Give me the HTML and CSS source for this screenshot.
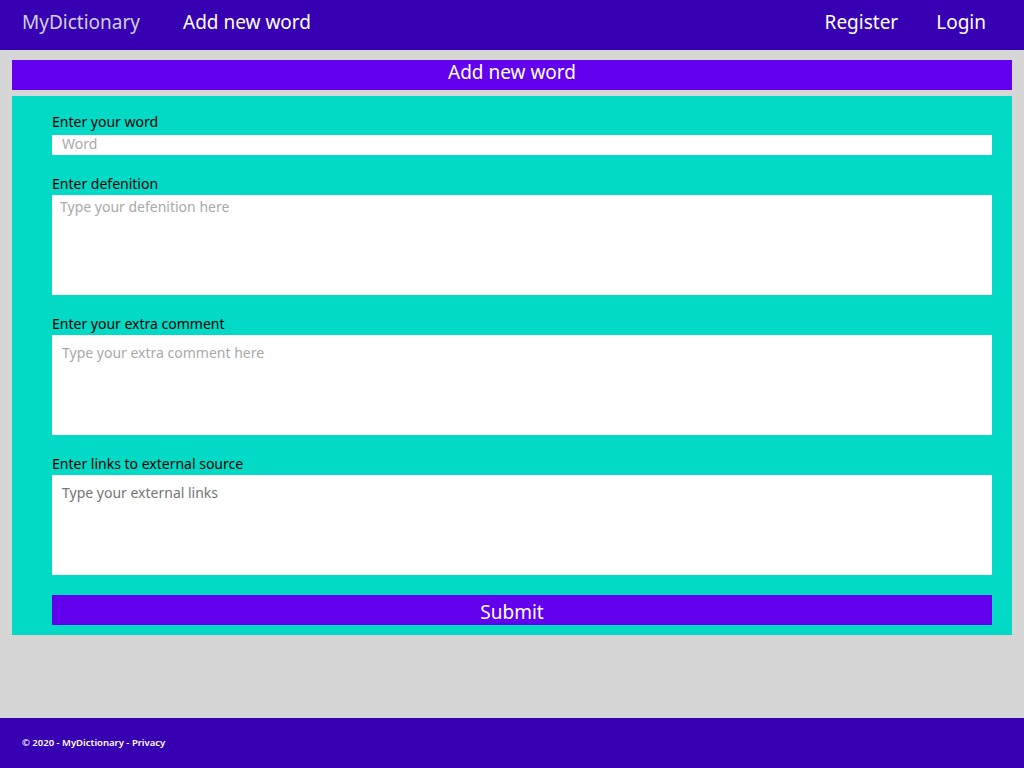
FILE: index.html
```html
<!DOCTYPE html>
<html lang="en">
<head>
<meta charset="utf-8">
<title>Add new word - MyDictionary</title>
<link rel="stylesheet" href="styles.css">
</head>
<body>
<header class="navbar">
  <a class="brand" href="#">MyDictionary</a>
  <a class="nav-link" href="#">Add new word</a>
  <div class="nav-right">
    <a class="nav-link" href="#">Register</a>
    <a class="nav-link" href="#">Login</a>
  </div>
</header>
<main class="main">
  <h1 class="title">Add new word</h1>
  <form class="panel">
    <label class="label label-first" for="word">Enter your word</label>
    <input class="input" id="word" type="text" placeholder="Word">
    <label class="label" for="def">Enter defenition</label>
    <textarea class="area area-def" id="def" placeholder="Type your defenition here"></textarea>
    <label class="label" for="com">Enter your extra comment</label>
    <textarea class="area" id="com" placeholder="Type your extra comment here"></textarea>
    <label class="label" for="links">Enter links to external source</label>
    <textarea class="area area-dark" id="links" placeholder="Type your external links"></textarea>
    <button class="submit" type="submit">Submit</button>
  </form>
</main>
<footer class="footer">
  <span>© 2020 - MyDictionary - <a href="#">Privacy</a></span>
</footer>
</body>
</html>
```

FILE: styles.css
```css
* { box-sizing: border-box; }
html, body { margin: 0; padding: 0; }
body {
  font-family: "Segoe UI", "Noto Sans", "Open Sans", sans-serif;
  background: #d6d6d6;
  min-height: 100vh;
  display: flex;
  flex-direction: column;
}
a { text-decoration: none; color: inherit; }
.navbar {
  height: 50px;
  background: #3700b3;
  display: flex;
  align-items: center;
  padding: 0 38px 6px 22px;
  font-size: 19px;
}
.brand { color: #d0d0e0; margin-right: 43px; }
.nav-link { color: #fff; }
.nav-right { margin-left: auto; display: flex; gap: 38px; }
.main {
  flex: 1;
  padding: 10px 12px;
}
.title {
  margin: 0;
  height: 30px;
  line-height: 25px;
  background: #6200ee;
  color: #fff;
  font-size: 19px;
  font-weight: 400;
  text-align: center;
}
.panel {
  margin-top: 6px;
  background: #03dac6;
  padding: 17px 20px 10px 40px;
  display: flex;
  flex-direction: column;
}
.label {
  font-size: 14px;
  line-height: 18px;
  margin-bottom: 2px;
  color: #000;
}
.label-first { margin-bottom: 4px; }
.input, .area {
  border: none;
  outline: none;
  background: #fff;
  font-family: inherit;
  font-size: 14px;
  margin: 0 0 20px 0;
}
.input {
  height: 20px;
  padding: 0 10px 4px;
  line-height: 16px;
}
.area {
  height: 100px;
  resize: none;
  padding: 9px 10px;
  line-height: 18px;
}
.area-def { padding: 3px 8px; }
.input::placeholder, .area::placeholder { color: #a9a9a9; opacity: 1; }
.area-dark::placeholder { color: #757575; }
.submit {
  height: 30px;
  border: none;
  background: #6200ee;
  color: #fff;
  font-family: inherit;
  font-size: 19px;
  padding: 3px 20px 0 0;
  cursor: pointer;
}
.footer {
  height: 50px;
  background: #3700b3;
  color: #fff;
  display: flex;
  align-items: center;
  padding: 0 22px 2px;
  font-size: 9.5px;
  font-weight: 600;
}
```
